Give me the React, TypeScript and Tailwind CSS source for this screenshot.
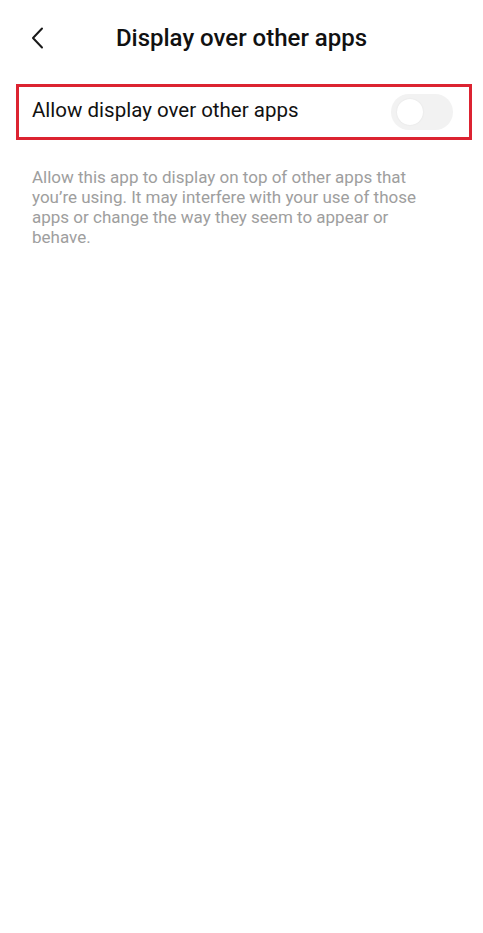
import { useState } from "react";

const FONT = { fontFamily: "Roboto, 'Noto Sans', sans-serif" };

function Toggle({ on, onChange }: { on: boolean; onChange: (v: boolean) => void }) {
  return (
    <button
      type="button"
      onClick={() => onChange(!on)}
      className={
        "relative h-[36px] w-[62px] shrink-0 rounded-full transition-colors " +
        (on ? "bg-[#0d84ff]" : "bg-[#f2f2f2]")
      }
    >
      <span
        className={
          "absolute top-[5px] h-[26px] w-[26px] rounded-full bg-white shadow-[0_0_2px_rgba(0,0,0,0.08)] transition-all " +
          (on ? "left-[31px]" : "left-[6px]")
        }
      />
    </button>
  );
}

export default function App() {
  const [allowed, setAllowed] = useState(false);

  return (
    <div className="min-h-[933px] w-full bg-white" style={FONT}>
      {/* header */}
      <div className="grid h-[78px] grid-cols-[1fr_auto_1fr] items-center pb-[2px]">
        <button type="button" className="ml-[29px] flex h-[24px] w-[16px] items-center justify-center">
          <svg width="14" height="22" viewBox="0 0 14 22" fill="none">
            <path d="M12 1.5 3 11l9 9.5" stroke="#1a1a1a" strokeWidth="2" strokeLinecap="round" strokeLinejoin="round" />
          </svg>
        </button>
        <h1 className="text-[24px] font-medium text-[#111]">Display over other apps</h1>
        <div />
      </div>

      {/* highlighted row */}
      <div className="ml-[16px] mr-[11px] mt-[6px] flex h-[56px] items-center justify-between border-[3px] border-[#dc2331] pl-[13px] pr-[16px]">
        <span className="pb-[3px] text-[20.5px] text-[#111]">Allow display over other apps</span>
        <Toggle on={allowed} onChange={setAllowed} />
      </div>

      {/* description */}
      <p className="mt-[27px] pl-[32px] pr-[44px] text-[17px] leading-[20px] text-[#9e9e9e]">
        Allow this app to display on top of other apps that you’re using. It may interfere with your use of those apps or
        change the way they seem to appear or behave.
      </p>
    </div>
  );
}
